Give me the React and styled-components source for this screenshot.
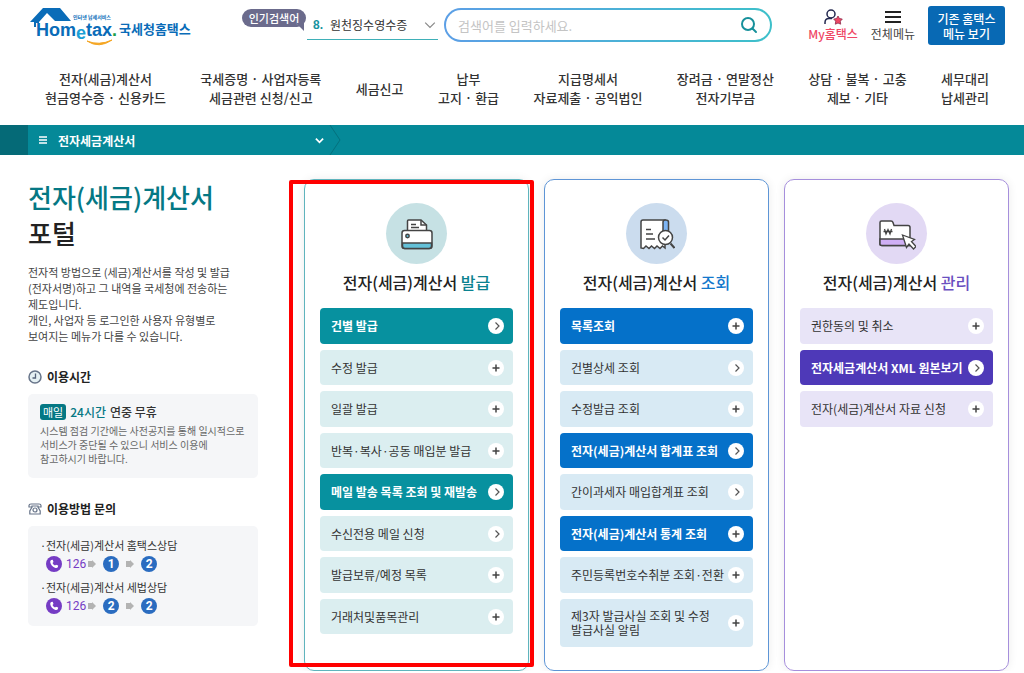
import React from "react";

//Styling
import styled, { createGlobalStyle } from "styled-components";

//Data
const menus = [
  ["전자(세금)계산서", "현금영수증 · 신용카드"],
  ["국세증명 · 사업자등록", "세금관련 신청/신고"],
  ["세금신고"],
  ["납부", "고지 · 환급"],
  ["지급명세서", "자료제출 · 공익법인"],
  ["장려금 · 연말정산", "전자기부금"],
  ["상담 · 불복 · 고충", "제보 · 기타"],
  ["세무대리", "납세관리"],
];

const themes = {
  teal: {
    border: "#5fb4bd",
    circle: "#c6e1e4",
    text: "#0b8290",
    strong: "#07919f",
    soft: "#dbeef0",
  },
  blue: {
    border: "#5e95d6",
    circle: "#cbdcee",
    text: "#1478cc",
    strong: "#0571c9",
    soft: "#d8eaf4",
  },
  purple: {
    border: "#a68fdc",
    circle: "#e2d9f4",
    text: "#6a4fc0",
    strong: "#4e39b8",
    soft: "#e8e4f7",
  },
};

const issueItems = [
  { label: "건별 발급", strong: true, arrow: true },
  { label: "수정 발급" },
  { label: "일괄 발급" },
  { label: "반복·복사·공동 매입분 발급" },
  { label: "메일 발송 목록 조회 및 재발송", strong: true, arrow: true },
  { label: "수신전용 메일 신청", arrow: true },
  { label: "발급보류/예정 목록" },
  { label: "거래처및품목관리" },
];

const searchItems = [
  { label: "목록조회", strong: true },
  { label: "건별상세 조회", arrow: true },
  { label: "수정발급 조회" },
  { label: "전자(세금)계산서 합계표 조회", strong: true, arrow: true },
  { label: "간이과세자 매입합계표 조회", arrow: true },
  { label: "전자(세금)계산서 통계 조회", strong: true },
  { label: "주민등록번호수취분 조회·전환" },
  { label: "제3자 발급사실 조회 및 수정 발급사실 알림" },
];

const manageItems = [
  { label: "권한동의 및 취소" },
  { label: "전자세금계산서 XML 원본보기", strong: true, arrow: true },
  { label: "전자(세금)계산서 자료 신청" },
];

//Icons
const Logo = () => (
  <svg width="164" height="42" viewBox="0 0 164 42" role="img" aria-label="Hometax 국세청홈택스">
    <path d="M2 16 L15 2 H32 L43 15 H27 L19 7 L11 16 V17 H8 V21 H6 V16 Z" fill="#0a6cb8" />
    <g fontFamily="'Noto Sans CJK KR', sans-serif" fontWeight="700" fill="#0a6cb8">
      <text x="45" y="13" fontSize="5">인터넷 납세서비스</text>
      <text x="91" y="28" fontSize="13">국세청홈택스</text>
    </g>
    <g fontFamily="'Liberation Sans', sans-serif" fontWeight="700" fontSize="18" fill="#0a6cb8">
      <text x="8" y="30">
        Hom
        <tspan dy="3" fill="#1c9fd6">e</tspan>
        <tspan dy="-3">tax</tspan>
        <tspan fill="#1da049">.</tspan>
      </text>
    </g>
    <path d="M59 35 Q71 43 84 34 Q71 40 59 35 Z" fill="#f5a623" stroke="#f5a623" />
  </svg>
);

const SearchIcon = () => (
  <svg width="18" height="18" viewBox="0 0 18 18" fill="none" stroke="#16909b" strokeWidth="2">
    <circle cx="8" cy="8" r="6" />
    <path d="M12.500 12.500 L16 16" strokeLinecap="round" />
  </svg>
);

const MyIcon = () => (
  <svg width="22" height="18" viewBox="0 0 22 18" fill="none">
    <circle cx="9" cy="6" r="4" stroke="#23284f" strokeWidth="1.500" />
    <path d="M3 16 V14.500 Q3 10.500 7 10.500 H10" stroke="#23284f" strokeWidth="1.500" />
    <path
      d="M16 8 L17.400 10.500 L20.300 11.100 L18.300 13.200 L18.700 16.200 L16 15 L13.300 16.200 L13.700 13.200 L11.700 11.100 L14.600 10.500 Z"
      fill="#ef4765"
      stroke="#8c2b4b"
      strokeWidth="0.800"
    />
  </svg>
);

const BurgerIcon = () => (
  <svg width="18" height="18" viewBox="0 0 18 18" stroke="#222" strokeWidth="2">
    <path d="M1 4 H17 M1 9 H17 M1 14 H17" />
  </svg>
);

const ChevronIcon = ({ color, size, width }) => (
  <svg width={size} height={size} viewBox="0 0 10 10" fill="none" stroke={color} strokeWidth={width}>
    <path d="M1 3 L5 7 L9 3" />
  </svg>
);

const ClockIcon = () => (
  <svg width="14" height="14" viewBox="0 0 14 14" fill="none">
    <circle cx="7" cy="7" r="6" fill="#e6f1f4" stroke="#68758a" strokeWidth="1.500" />
    <path d="M7.500 3.500 V8 H4.500" stroke="#55627a" strokeWidth="1.300" />
  </svg>
);

const TelIcon = () => (
  <svg width="14" height="14" viewBox="0 0 14 14" fill="none" stroke="#68758a" strokeWidth="1.200">
    <path d="M1 5 V3.500 Q1 2 3 2 H11 Q13 2 13 3.500 V5 H10 V4 H4 V5 Z" />
    <path d="M4 5 L1.800 9 V12 H12.200 V9 L10 5" />
    <circle cx="7" cy="8" r="2" />
  </svg>
);

const PhoneIcon = () => (
  <svg width="16" height="16" viewBox="0 0 16 16">
    <circle cx="8" cy="8" r="8" fill="#753cc4" />
    <path
      d="M5.200 4 L6.700 3.700 L7.500 6 L6.500 7 Q7.200 8.700 9 9.600 L10 8.700 L12.200 9.600 L11.800 11.300 Q11 12.200 9.500 11.900 Q5 10.500 4.200 6 Q4.200 4.600 5.200 4 Z"
      fill="#fff"
    />
  </svg>
);

const ArrowIcon = () => (
  <svg width="8" height="8" viewBox="0 0 8 8">
    <path d="M0 1 H4 V0 L8 4 L4 8 V7 H0 Z" fill="#b3b3b3" />
  </svg>
);

const PrinterIcon = () => (
  <svg width="34" height="34" viewBox="0 0 34 34" fill="#fff" stroke="#444" strokeWidth="1.500">
    <path d="M7.500 14 V4 Q7.500 3 8.500 3 H21 L26.500 8 V14 Z" />
    <path d="M21 3 V8 H26.500 M11 7.500 H16 M11 10.500 H19" fill="none" />
    <rect x="2" y="13.500" width="30" height="18" rx="2.500" />
    <path d="M2.500 26 H31.500 V29 Q31.500 31.500 29 31.500 H5 Q2.500 31.500 2.500 29 Z" fill="#64c1d8" />
    <circle cx="7.500" cy="19" r="1.700" fill="#64c1d8" />
  </svg>
);

const ReceiptIcon = () => (
  <svg width="36" height="34" viewBox="0 0 36 34" fill="#fff" stroke="#444" strokeWidth="1.500">
    <path d="M2 31 V5 Q2 3 4 3 H26 V31 L23.500 29 L21 31.500 L18 29 L15.500 31.500 L12.500 29 L10 31.500 L7 29 L4.500 31.500 Z" />
    <path d="M24 14 V5 Q24 3 26.500 3 Q29.500 3 29.500 5 V14 Z" fill="#7db5f5" />
    <path d="M7 12.500 H12 M7 17 H14 M7 22 H16" fill="none" />
    <path d="M31.500 26.500 L35.500 31" strokeWidth="2" />
    <circle cx="26.500" cy="20.500" r="7" />
    <path d="M23.500 20.500 L26 23 L30 18.500" fill="none" />
  </svg>
);

const FolderIcon = () => (
  <svg width="38" height="34" viewBox="0 0 38 34" fill="#fff" stroke="#444" strokeWidth="1.500">
    <path d="M2 27 V5.500 Q2 4 3.500 4 H13 Q14.500 4 15 5.500 L16 8.500 H30 Q32 8.500 32 10.500 V28.500 H4 Q2 28.500 2 27 Z" />
    <path d="M2 22 H32 V28.500 H4 Q2 28.500 2 27 Z" fill="#cfaff5" />
    <path d="M6.500 12 L8 17 L10 12.500 L12 17 L13.500 12 M5.500 14.500 H14.500" fill="none" strokeWidth="1.300" />
    <path d="M24.500 18 L36.500 22.500 L33.500 24.500 L38 29.500 L35.500 32 L31 27 L28.500 30.500 Z" strokeWidth="1.300" />
  </svg>
);

const PlusMark = () => (
  <svg width="16" height="16" viewBox="0 0 16 16">
    <circle cx="8" cy="8" r="8" fill="#fff" />
    <path d="M8 4.500 V11.500 M4.500 8 H11.500" stroke="#444" strokeWidth="1.500" />
  </svg>
);

const ArrowMark = () => (
  <svg width="16" height="16" viewBox="0 0 16 16" fill="none">
    <circle cx="8" cy="8" r="8" fill="#fff" />
    <path d="M7.500 4.500 L11 8 L7.500 11.500" stroke="#555" strokeWidth="1.200" />
  </svg>
);

//Components
const MenuCard = ({ theme, icon, accent, items, marked }) => (
  <Card $theme={theme}>
    <IconCircle $theme={theme}>{icon}</IconCircle>
    <CardTitle $theme={theme}>
      전자(세금)계산서 <span>{accent}</span>
    </CardTitle>
    <ItemList>
      {items.map((item) => (
        <li key={item.label}>
          <ItemLink href="#" $theme={theme} $strong={item.strong}>
            <span>{item.label}</span>
            {item.arrow ? <ArrowMark /> : <PlusMark />}
          </ItemLink>
        </li>
      ))}
    </ItemList>
    {marked && <Marker />}
  </Card>
);

const CallRoute = ({ name, steps }) => (
  <li>
    <RouteName>
      <span>·</span>
      {name}
    </RouteName>
    <Route>
      <PhoneIcon />
      <a href="tel:126">126</a>
      {steps.map((step, i) => (
        <React.Fragment key={i}>
          <ArrowIcon />
          <Step>{step}</Step>
        </React.Fragment>
      ))}
    </Route>
  </li>
);

const App = () => {
  return (
    <>
      <GlobalStyle />
      <header>
        <TopRow>
          <LogoLink href="#">
            <Logo />
          </LogoLink>
          <Badge>인기검색어</Badge>
          <Popular>
            <b>8.</b>
            <select aria-label="인기검색어">
              <option>원천징수영수증</option>
            </select>
            <ChevronIcon color="#888" size={12} width={1} />
          </Popular>
          <SearchBox>
            <input type="text" aria-label="검색어" placeholder="검색어를 입력하세요." />
            <button type="button" aria-label="검색">
              <SearchIcon />
            </button>
          </SearchBox>
          <Tools>
            <ToolButton type="button" $accent>
              <MyIcon />
              My홈택스
            </ToolButton>
            <ToolButton type="button">
              <BurgerIcon />
              전체메뉴
            </ToolButton>
            <OldButton type="button">
              기존 홈택스
              <br />
              메뉴 보기
            </OldButton>
          </Tools>
        </TopRow>
        <MainNav>
          {menus.map((lines) => (
            <a href="#" key={lines[0]}>
              {lines.map((line) => (
                <span key={line}>{line}</span>
              ))}
            </a>
          ))}
        </MainNav>
      </header>

      <Crumb>
        <CrumbButton type="button">
          <svg width="8" height="8" viewBox="0 0 8 8" stroke="#fff" strokeWidth="1.500">
            <path d="M0 1 H8 M0 4 H8 M0 7 H8" />
          </svg>
          <span>전자세금계산서</span>
          <ChevronIcon color="#fff" size={9} width={2} />
        </CrumbButton>
        <svg width="12" height="30" viewBox="0 0 12 30" fill="none" stroke="#05707d">
          <path d="M1 0 L11 15 L1 30" />
        </svg>
      </Crumb>

      <Main>
        <aside>
          <Title>
            <span>전자(세금)계산서</span>
            <br />
            포털
          </Title>
          <Intro>
            전자적 방법으로 (세금)계산서를 작성 및 발급
            <br />
            (전자서명)하고 그 내역을 국세청에 전송하는
            <br />
            제도입니다.
            <br />
            개인, 사업자 등 로그인한 사용자 유형별로
            <br />
            보여지는 메뉴가 다를 수 있습니다.
          </Intro>
          <SideTitle>
            <ClockIcon />
            이용시간
          </SideTitle>
          <Panel>
            <Hours>
              <em>매일</em>
              <span>24시간</span> 연중 무휴
            </Hours>
            <Note>
              시스템 점검 기간에는 사전공지를 통해 일시적으로
              <br />
              서비스가 중단될 수 있으니 서비스 이용에
              <br />
              참고하시기 바랍니다.
            </Note>
          </Panel>
          <SideTitle>
            <TelIcon />
            이용방법 문의
          </SideTitle>
          <Panel>
            <Routes>
              <CallRoute name="전자(세금)계산서 홈택스상담" steps={[1, 2]} />
              <CallRoute name="전자(세금)계산서 세법상담" steps={[2, 2]} />
            </Routes>
          </Panel>
        </aside>
        <Cards>
          <MenuCard theme={themes.teal} icon={<PrinterIcon />} accent="발급" items={issueItems} marked />
          <MenuCard theme={themes.blue} icon={<ReceiptIcon />} accent="조회" items={searchItems} />
          <MenuCard theme={themes.purple} icon={<FolderIcon />} accent="관리" items={manageItems} />
        </Cards>
      </Main>
    </>
  );
};

const GlobalStyle = createGlobalStyle`
  * {
    margin: 0;
    padding: 0;
    box-sizing: border-box;
  }
  body {
    background: #fff;
    color: #333;
    font-family: "Noto Sans CJK KR", sans-serif;
    font-size: 12px;
    overflow-x: hidden;
  }
  a {
    color: inherit;
    text-decoration: none;
  }
  ul {
    list-style: none;
  }
  button, input, select {
    font: inherit;
    color: inherit;
    border: 0;
    background: none;
  }
  button {
    cursor: pointer;
  }
  svg {
    flex: none;
    display: block;
  }
`;

const TopRow = styled.div`
  display: flex;
  align-items: flex-start;
  height: 60px;
  padding: 6px 19px 0 28px;
`;

const LogoLink = styled.a`
  width: 214px;
`;

const Badge = styled.span`
  position: relative;
  width: 64px;
  margin-top: 3px;
  border-radius: 9px;
  background: #6b6b8c;
  color: #fff;
  font-size: 11px;
  font-weight: 500;
  line-height: 18px;
  text-align: center;

  &::after {
    content: "";
    position: absolute;
    right: 2px;
    top: 14px;
    border-top: 8px solid #6b6b8c;
    border-left: 8px solid transparent;
  }
`;

const Popular = styled.div`
  display: flex;
  align-items: center;
  width: 131px;
  height: 34px;
  margin: 0 6px 0 1px;
  padding: 4px 2px 0 6px;
  border-bottom: 1px solid #3fb0b8;

  b {
    width: 17px;
    color: #1693a0;
    font-family: "Liberation Sans", sans-serif;
  }
  select {
    flex: 1;
    min-width: 0;
    appearance: none;
  }
`;

const SearchBox = styled.div`
  display: flex;
  align-items: center;
  flex: 1;
  min-width: 0;
  height: 34px;
  margin: 2px 36px 0 0;
  padding: 0 12px;
  border: 2px solid transparent;
  border-radius: 17px;
  background: linear-gradient(#fff, #fff) padding-box,
    linear-gradient(90deg, #5c9fe6, #3dc0ca) border-box;

  input {
    flex: 1;
    min-width: 0;
    font-size: 13px;
    outline: none;
  }
  input::placeholder {
    color: #c4c4c4;
    opacity: 1;
  }
`;

const Tools = styled.div`
  display: flex;
`;

const ToolButton = styled.button`
  display: flex;
  flex-direction: column;
  align-items: center;
  margin: 2px 13px 0 0;
  color: ${({ $accent }) => ($accent ? "#ef4765" : "#444")};
  font-weight: ${({ $accent }) => ($accent ? 500 : 400)};
  line-height: 16px;
`;

const OldButton = styled.button`
  width: 77px;
  height: 39px;
  border-radius: 3px;
  background: #0869b4;
  color: #fff;
  font-weight: 500;
  line-height: 15px;
`;

const MainNav = styled.nav`
  display: flex;
  align-items: center;
  justify-content: space-between;
  height: 65px;
  padding: 0 35px 9px 45px;

  a {
    display: flex;
    flex-direction: column;
    align-items: center;
    font-size: 13px;
    font-weight: 500;
    line-height: 19px;
    white-space: nowrap;
  }
`;

const Crumb = styled.div`
  display: flex;
  height: 30px;
  border-left: 28px solid #056a77;
  background: #058998;
`;

const CrumbButton = styled.button`
  display: flex;
  align-items: center;
  width: 301px;
  padding: 0 5px 0 11px;
  color: #fff;
  font-weight: 700;
  text-align: left;

  span {
    flex: 1;
    padding-left: 11px;
  }
`;

const Main = styled.main`
  display: grid;
  grid-template-columns: 230px 1fr;
  gap: 46px;
  padding: 24px 15px 0 28px;
`;

const Title = styled.h1`
  color: #222;
  font-size: 26px;
  font-weight: 500;
  line-height: 36px;

  span {
    color: #057884;
  }
`;

const Intro = styled.p`
  margin: 13px 0 24px;
  color: #444;
  font-size: 11px;
  line-height: 16px;
  white-space: nowrap;
`;

const SideTitle = styled.h2`
  display: flex;
  align-items: center;
  gap: 5px;
  margin-bottom: 8px;
  color: #222;
  font-size: 12px;
  font-weight: 700;
  line-height: 18px;
`;

const Panel = styled.div`
  margin-bottom: 22px;
  padding: 10px 12px;
  border-radius: 5px;
  background: #f5f6f8;
`;

const Hours = styled.p`
  display: flex;
  align-items: center;
  gap: 4px;
  font-weight: 500;
  line-height: 16px;

  em {
    padding: 0 3px;
    border-radius: 3px;
    background: #057884;
    color: #fff;
    font-size: 11px;
    font-style: normal;
    font-weight: 400;
  }
  span {
    color: #057884;
  }
`;

const Note = styled.p`
  padding: 4px 0 2px;
  color: #666;
  font-size: 10px;
  line-height: 14px;
  white-space: nowrap;
`;

const Routes = styled.ul`
  display: grid;
  gap: 4px;
`;

const RouteName = styled.p`
  display: flex;
  font-size: 11px;
  line-height: 18px;

  span {
    width: 6px;
  }
`;

const Route = styled.div`
  display: flex;
  align-items: center;
  height: 20px;
  padding-left: 6px;

  a {
    margin: 0 2px 0 4px;
    color: #753cc4;
    font-family: Roboto, sans-serif;
  }
`;

const Step = styled.span`
  width: 16px;
  margin: 0 7px;
  border-radius: 50%;
  background: #2a6cc0;
  color: #fff;
  font-family: Roboto, sans-serif;
  font-weight: 700;
  line-height: 16px;
  text-align: center;
`;

const Cards = styled.div`
  display: grid;
  grid-template-columns: repeat(3, minmax(0, 1fr));
  gap: 15px;
`;

const Card = styled.section`
  position: relative;
  padding: 23px 15px;
  border: 1px solid ${({ $theme }) => $theme.border};
  border-radius: 10px;
  box-shadow: 0 0 10px rgba(0, 0, 0, 0.08);
`;

const IconCircle = styled.div`
  display: flex;
  align-items: center;
  justify-content: center;
  width: 61px;
  height: 61px;
  margin: 0 auto;
  border-radius: 50%;
  background: ${({ $theme }) => $theme.circle};
`;

const CardTitle = styled.h2`
  margin-bottom: 8px;
  color: #222;
  font-size: 16px;
  font-weight: 500;
  line-height: 36px;
  text-align: center;
  white-space: nowrap;

  span {
    color: ${({ $theme }) => $theme.text};
  }
`;

const ItemList = styled.ul`
  display: flex;
  flex-direction: column;
  gap: 6px;

  li {
    display: flex;
    min-height: 35px;
  }
  li:nth-child(odd) {
    min-height: 36px;
  }
`;

const ItemLink = styled.a`
  display: flex;
  flex: 1;
  align-items: center;
  justify-content: space-between;
  gap: 4px;
  padding: 9px 9px 9px 11px;
  border-radius: 4px;
  background: ${({ $theme, $strong }) => ($strong ? $theme.strong : $theme.soft)};
  color: ${({ $strong }) => ($strong ? "#fff" : "#333")};
  font-weight: ${({ $strong }) => ($strong ? 700 : 400)};
  line-height: 14px;
  word-break: keep-all;

  span {
    padding: 1px 0;
  }
`;

const Marker = styled.div`
  position: absolute;
  inset: 0 -6px 3px -16px;
  border: 4px solid #f00;
  border-radius: 2px;
  pointer-events: none;
`;

export default App;
